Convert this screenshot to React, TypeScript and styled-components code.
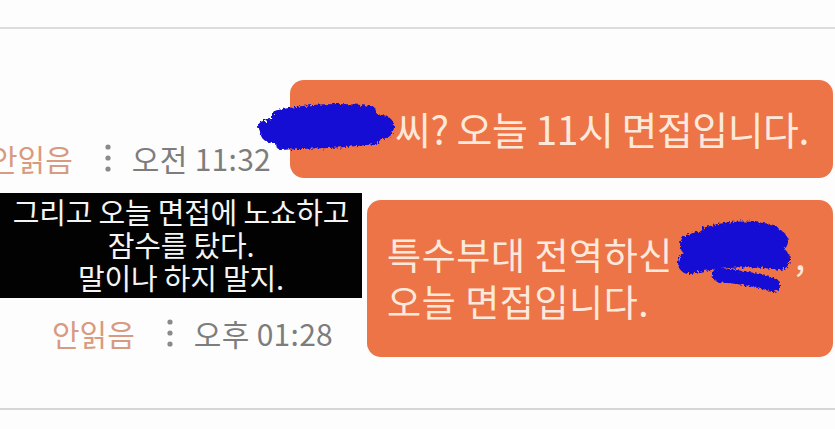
import React from "react";
import styled, { createGlobalStyle } from "styled-components";

const Global = createGlobalStyle`
  html, body { margin: 0; padding: 0; background: #fdfdfd; }
  body { font-family: "Noto Sans CJK KR", "Noto Sans", sans-serif; }
`;

const Page = styled.div`
  width: 835px;
  height: 429px;
  overflow: hidden;
  background: #fdfdfd;
  padding-top: 27px;
  box-sizing: border-box;
`;

const Frame = styled.div`
  height: 383px;
  box-sizing: border-box;
  border-top: 2px solid #dcdcdc;
  border-bottom: 2px solid #d6d6d6;
  display: flex;
  flex-direction: column;
`;

const Row = styled.div<{ $top: number; $align: string }>`
  display: flex;
  align-items: ${(p) => p.$align};
  margin-top: ${(p) => p.$top}px;
`;

const Meta = styled.div<{ $left: number; $width: number; $bottom?: number; $top?: number }>`
  display: flex;
  align-items: center;
  width: ${(p) => p.$width}px;
  height: 36px;
  margin-left: ${(p) => p.$left}px;
  margin-bottom: ${(p) => p.$bottom ?? 0}px;
  margin-top: ${(p) => p.$top ?? 0}px;
  flex-shrink: 0;
  font-size: 30px;
  line-height: 36px;
  white-space: nowrap;
`;

const Unread = styled.span`
  color: #d89a80;
`;

const DotsIcon = styled.svg`
  margin: 0 21px 0 32px;
  flex-shrink: 0;
`;

const Time = styled.span`
  color: #7d7d7d;
  letter-spacing: 0.3px;
`;

const Bubble = styled.div<{ $width: number; $height: number; $padTop: number; $mt?: number; $fs: number; $ls: number; $pl: number }>`
  position: relative;
  box-sizing: border-box;
  width: ${(p) => p.$width}px;
  height: ${(p) => p.$height}px;
  margin-top: ${(p) => p.$mt ?? 0}px;
  padding: ${(p) => p.$padTop}px 0 0 ${(p) => p.$pl}px;
  background: #ec7447;
  border-radius: 14px;
  color: #fde9dc;
  font-size: ${(p) => p.$fs}px;
  line-height: 46px;
  letter-spacing: ${(p) => p.$ls}px;
  white-space: nowrap;
  flex-shrink: 0;
`;

const Hidden = styled.span<{ $w: number; $ml?: number }>`
  position: relative;
  display: inline-block;
  width: ${(p) => p.$w}px;
  margin-left: ${(p) => p.$ml ?? 0}px;
  height: 1em;
  vertical-align: middle;
`;

const Scribble = styled.svg<{ $l: number; $t: number }>`
  position: absolute;
  left: ${(p) => p.$l}px;
  top: ${(p) => p.$t}px;
  overflow: visible;
`;

const LeftCol = styled.div`
  width: 367px;
  display: flex;
  flex-direction: column;
  flex-shrink: 0;
`;

const Caption = styled.div`
  width: 362px;
  height: 105px;
  background: #020202;
  color: #f4f4f4;
  font-size: 29px;
  line-height: 33px;
  letter-spacing: -0.2px;
  text-align: center;
  padding-top: 2px;
  box-sizing: border-box;
  white-space: nowrap;
`;

const Dots = () => (
  <DotsIcon width="6" height="30" viewBox="0 0 6 30">
    <circle cx="3" cy="4" r="2.6" fill="#8a8a8a" />
    <circle cx="3" cy="15" r="2.6" fill="#8a8a8a" />
    <circle cx="3" cy="26" r="2.6" fill="#8a8a8a" />
  </DotsIcon>
);

const BlueMark = ({ id, w, h, l, t, d }: { id: string; w: number; h: number; l: number; t: number; d: [string, number][] }) => (
  <Scribble $l={l} $t={t} width={w} height={h} viewBox={`0 0 ${w} ${h}`}>
    <defs>
      <filter id={id} x="-20%" y="-40%" width="140%" height="180%">
        <feTurbulence type="fractalNoise" baseFrequency="0.4" numOctaves="2" result="n" />
        <feDisplacementMap in="SourceGraphic" in2="n" scale="6" />
      </filter>
    </defs>
    <g filter={`url(#${id})`} fill="none" stroke="#1510d4" strokeLinecap="round" strokeLinejoin="round">
      {d.map(([p, sw], i) => (
        <path key={i} d={p} strokeWidth={sw} />
      ))}
    </g>
  </Scribble>
);

export default function App() {
  return (
    <>
      <Global />
      <Page>
        <Frame>
          <Row $top={51} $align="flex-end">
            <Meta $left={-10} $width={300} $bottom={2}>
              <Unread>안읽음</Unread>
              <Dots />
              <Time>오전 11:32</Time>
            </Meta>
            <Bubble $width={543} $height={98} $padTop={25} $fs={39} $ls={-0.5} $pl={20}>
              <Hidden $w={85}>
                <BlueMark
                  id="r1"
                  w={140}
                  h={60}
                  l={-52}
                  t={-14}
                  d={[
                    ["M14 30 C 40 22, 90 20, 124 26", 24],
                    ["M20 16 C 50 10, 85 8, 112 12", 14],
                    ["M24 42 C 60 40, 90 40, 116 36", 14],
                    ["M6 26 L 20 36", 12],
                  ]}
                />
              </Hidden>
              씨? 오늘 11시 면접입니다.
            </Bubble>
          </Row>
          <Row $top={15} $align="flex-start">
            <LeftCol>
              <Caption>
                그리고 오늘 면접에 노쇼하고
                <br />
                잠수를 탔다.
                <br />
                말이나 하지 말지.
              </Caption>
              <Meta $left={52} $width={315} $top={17}>
                <Unread>안읽음</Unread>
                <Dots />
                <Time>오후 01:28</Time>
              </Meta>
            </LeftCol>
            <Bubble $width={466} $height={157} $padTop={31} $mt={7} $fs={37} $ls={0.6} $pl={20}>
              특수부대 전역하신
              <Hidden $w={118} $ml={4}>
                <BlueMark
                  id="r2"
                  w={130}
                  h={80}
                  l={0}
                  t={-22}
                  d={[
                    ["M14 26 C 40 18, 80 16, 100 22", 22],
                    ["M12 44 C 45 36, 80 36, 102 40", 22],
                    ["M30 14 C 55 6, 82 8, 96 12", 12],
                    ["M42 56 C 65 58, 84 62, 96 66", 14],
                  ]}
                />
              </Hidden>
              ,
              <br />
              오늘 면접입니다.
            </Bubble>
          </Row>
        </Frame>
      </Page>
    </>
  );
}
